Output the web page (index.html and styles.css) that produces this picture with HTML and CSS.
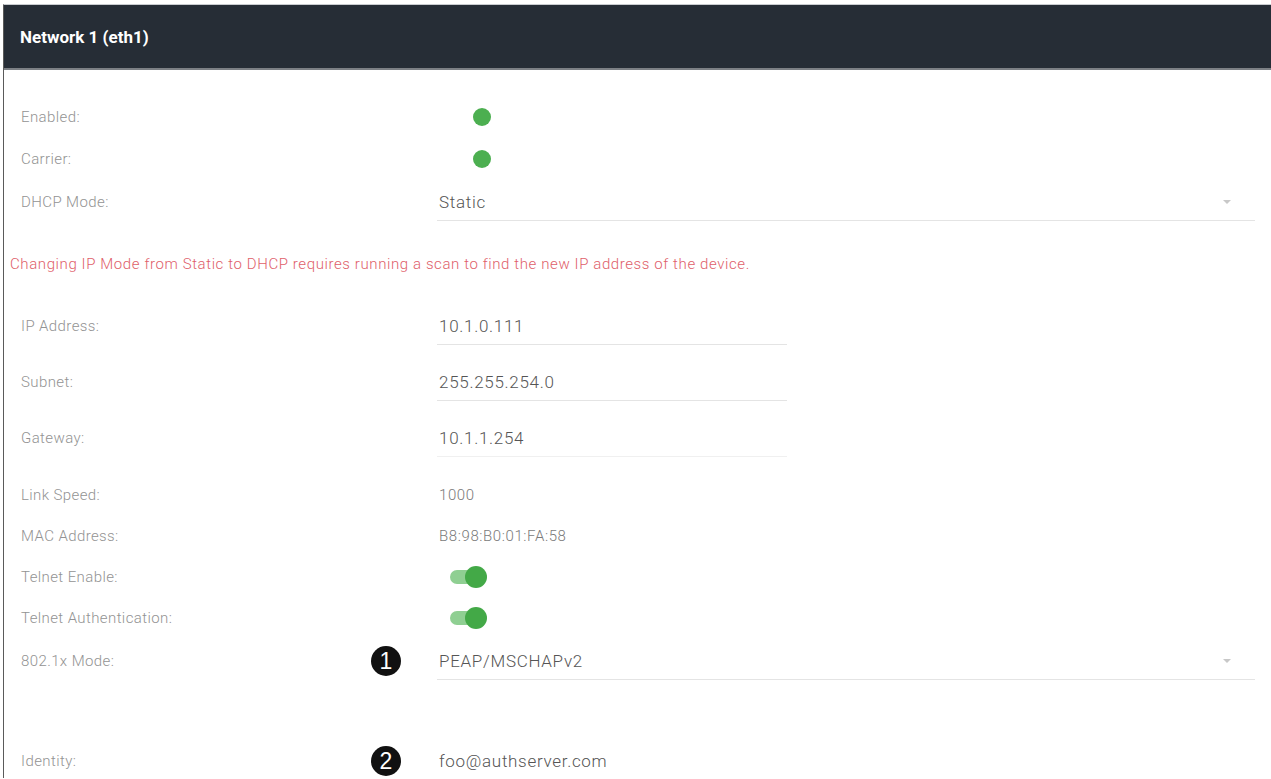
FILE: index.html
```html
<!DOCTYPE html>
<html>
<head>
<meta charset="utf-8">
<link rel="stylesheet" href="styles.css">
</head>
<body>
<div class="panel">
  <div class="panel-header">Network 1 (eth1)</div>
  <div class="panel-body">
    <div class="row r42">
      <div class="label-cell"><span class="label">Enabled:</span></div>
      <div class="value"><span class="dot"></span></div>
    </div>
    <div class="row r42">
      <div class="label-cell"><span class="label">Carrier:</span></div>
      <div class="value"><span class="dot"></span></div>
    </div>
    <div class="row r44">
      <div class="label-cell"><span class="label">DHCP Mode:</span></div>
      <div class="field field-wide">
        <span class="field-text">Static</span>
        <span class="caret"></span>
      </div>
    </div>
    <div class="message">Changing IP Mode from Static to DHCP requires running a scan to find the new IP address of the device.</div>
    <div class="row r56 first-ip">
      <div class="label-cell"><span class="label">IP Address:</span></div>
      <div class="field field-short"><span class="field-text">10.1.0.111</span></div>
    </div>
    <div class="row r56">
      <div class="label-cell"><span class="label">Subnet:</span></div>
      <div class="field field-short"><span class="field-text">255.255.254.0</span></div>
    </div>
    <div class="row r56">
      <div class="label-cell"><span class="label">Gateway:</span></div>
      <div class="field field-short field-faint"><span class="field-text">10.1.1.254</span></div>
    </div>
    <div class="row r41 after-gw">
      <div class="label-cell"><span class="label">Link Speed:</span></div>
      <div class="value"><span class="plain">1000</span></div>
    </div>
    <div class="row r41">
      <div class="label-cell"><span class="label">MAC Address:</span></div>
      <div class="value"><span class="plain">B8:98:B0:01:FA:58</span></div>
    </div>
    <div class="row r41">
      <div class="label-cell"><span class="label">Telnet Enable:</span></div>
      <div class="value"><span class="toggle"><span class="knob"></span></span></div>
    </div>
    <div class="row r42">
      <div class="label-cell"><span class="label">Telnet Authentication:</span></div>
      <div class="value"><span class="toggle"><span class="knob"></span></span></div>
    </div>
    <div class="row r44">
      <div class="label-cell"><span class="label">802.1x Mode:</span><span class="badge">1</span></div>
      <div class="field field-wide">
        <span class="field-text">PEAP/MSCHAPv2</span>
        <span class="caret"></span>
      </div>
    </div>
    <div class="row r34 identity">
      <div class="label-cell"><span class="label">Identity:</span><span class="badge">2</span></div>
      <div class="value"><span class="field-text">foo@authserver.com</span></div>
    </div>
  </div>
</div>
</body>
</html>
```
FILE: styles.css
```css
html, body {
  margin: 0;
  padding: 0;
  background: #ffffff;
  font-family: Roboto, "Liberation Sans", Arial, sans-serif;
  overflow: hidden;
}

.panel {
  margin: 4px 0 0 3px;
  border-left: 1px solid #5a5a5a;
  border-top: 1px solid #c9ccd0;
  height: 774px;
  box-sizing: border-box;
}

.panel-header {
  height: 63px;
  background: #262d36;
  border-bottom: 2px solid #7c8085;
  color: #ffffff;
  font-weight: 700;
  font-size: 17px;
  display: flex;
  align-items: center;
  padding-left: 16px;
}

.panel-body {
  padding: 26px 16px 0 17px;
}

.row {
  display: flex;
  align-items: center;
}

.r34 { height: 34px; }
.r41 { height: 41px; }
.r42 { height: 42px; }
.r44 { height: 44px; }
.r56 { height: 56px; }

.first-ip { margin-top: 26px; }
.after-gw { margin-top: 8px; }
.identity { margin-top: 61px; }

.label-cell {
  flex: 0 0 416px;
  display: flex;
  align-items: center;
}

.label {
  flex: 1;
  font-size: 15px;
  font-weight: 300;
  color: #939393;
  letter-spacing: 0.4px;
}

.badge {
  width: 30px;
  height: 30px;
  border-radius: 50%;
  background: #111111;
  color: #ffffff;
  font-family: "Liberation Sans", Arial, sans-serif;
  font-size: 23px;
  display: flex;
  align-items: center;
  justify-content: center;
  margin-right: 36px;
}

.value {
  flex: 1;
  display: flex;
  align-items: center;
}

.dot {
  width: 18px;
  height: 18px;
  border-radius: 50%;
  background: #4caf50;
  margin-left: 36px;
}

.plain {
  font-size: 15px;
  font-weight: 300;
  color: #7a7a7a;
  padding-left: 2px;
  letter-spacing: 0.6px;
}

.toggle {
  position: relative;
  width: 34px;
  height: 14px;
  border-radius: 7px;
  background: #8fcf92;
  margin-left: 13px;
}

.knob {
  position: absolute;
  top: -4px;
  right: -3px;
  width: 22px;
  height: 22px;
  border-radius: 50%;
  background: #43a947;
}

.field {
  height: 37px;
  border-bottom: 1px solid #e4e4e4;
  display: flex;
  align-items: center;
  justify-content: space-between;
}

.field-wide {
  flex: 0 0 818px;
}

.field-short {
  flex: 0 0 350px;
}

.field-faint {
  border-bottom-color: #f0f0f0;
}

.field-text {
  font-size: 17px;
  font-weight: 300;
  color: #555555;
  padding-left: 2px;
  letter-spacing: 0.7px;
}

.caret {
  width: 0;
  height: 0;
  border-left: 4px solid transparent;
  border-right: 4px solid transparent;
  border-top: 4px solid #c8c8c8;
  margin-right: 24px;
}

.message {
  margin: 32px 0 0 -11px;
  height: 16px;
  line-height: 16px;
  font-size: 15px;
  font-weight: 300;
  color: #e0606a;
  letter-spacing: 0.6px;
}
```
